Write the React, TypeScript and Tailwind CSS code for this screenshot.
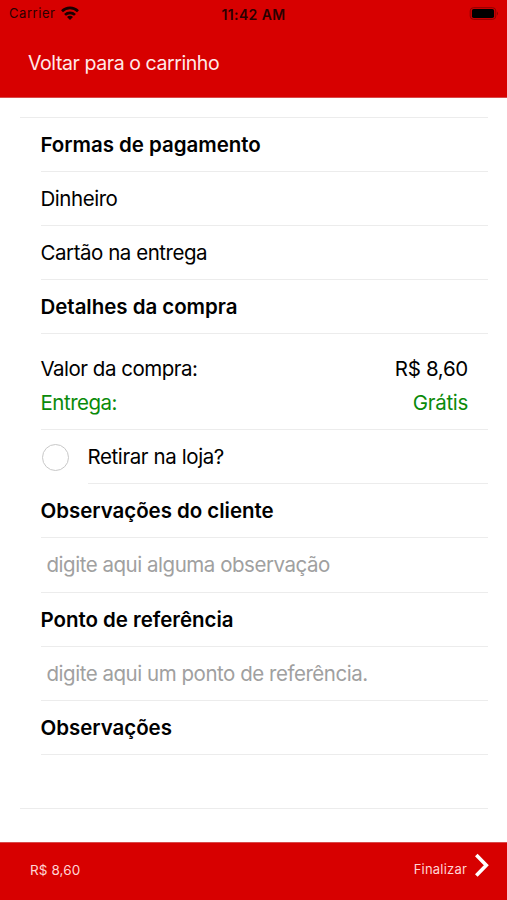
import type { ReactNode } from "react";

const VALOR = "R$ 8,60";

export default function App() {
  return (
    <div className="flex h-[900px] w-[507px] flex-col overflow-hidden bg-white font-['Inter',sans-serif] text-black">
      <header className="h-[98px] shrink-0 border-b border-[#d84a4a] bg-[#d70000]">
        <StatusBar />
        <button className="ml-7 mt-[22px] block text-[19.5px] leading-7 tracking-[-0.42px] text-[#ffe9e9]">
          Voltar para o carrinho
        </button>
      </header>

      <main className="ml-5 mr-[19px] mt-[19px] flex-1">
        <div className="border-y border-[#ececec] pl-[20.5px]">
          <Titulo>Formas de pagamento</Titulo>
          <Linha>Dinheiro</Linha>
          <Linha>Cartão na entrega</Linha>

          <Titulo>Detalhes da compra</Titulo>
          <div className="flex h-24 flex-col justify-center border-b border-[#ececec] pr-5 pt-[9px] text-[20.5px] tracking-[-0.5px]">
            <div className="flex h-[34px] items-center justify-between">
              <span>Valor da compra:</span>
              <span className="tracking-[-0.3px]">{VALOR}</span>
            </div>
            <div className="flex h-[34px] items-center justify-between text-[#0a8a0a]">
              <span>Entrega:</span>
              <span className="tracking-[-0.3px]">Grátis</span>
            </div>
          </div>

          <label className="flex h-[54px] items-center">
            <span className="ml-px size-[27px] shrink-0 rounded-full border border-[#c8c8c8]" />
            <span className="ml-[19px] flex h-full flex-1 items-center border-b border-[#ececec] pt-0.5 text-[20.5px] tracking-[-0.4px]">
              Retirar na loja?
            </span>
          </label>

          <Titulo>Observações do cliente</Titulo>
          <Campo placeholder="digite aqui alguma observação" />
          <Titulo>Ponto de referência</Titulo>
          <Campo placeholder="digite aqui um ponto de referência." />
          <Titulo>Observações</Titulo>
          <div className="h-[53px]" />
        </div>
      </main>

      <footer className="flex h-[58px] shrink-0 items-center justify-between border-t border-[#d84a4a] bg-[#d70000] pl-[30px] pr-[17px] text-[13px] tracking-[0.2px] text-[#ffd5d5]">
        <span className="-mt-[3px] text-[13.5px] tracking-[0.1px]">{VALOR}</span>
        <button className="-mt-[3px] flex items-center">
          <span>Finalizar</span>
          <svg className="-mt-[9px] ml-[7px]" width="16" height="25" viewBox="0 0 16 25" fill="none">
            <path d="M2.3 2 L12.3 12.3 L2.3 22.6" stroke="white" strokeWidth="3.6" />
          </svg>
        </button>
      </footer>
    </div>
  );
}

function StatusBar() {
  return (
    <div className="grid h-[27px] grid-cols-3 items-center px-2 text-[13px] text-[#2a0000]">
      <div className="flex items-center gap-1.5 pl-px">
        <span className="pt-px tracking-[0.55px]">Carrier</span>
        <svg className="-mt-px" width="18" height="14" viewBox="0 0 18 14" fill="none" stroke="#1a0000" strokeWidth="2.7">
          <path d="M1 5.2 A11.5 11.5 0 0 1 17 5.2" />
          <path d="M4 8.9 A7.2 7.2 0 0 1 14 8.9" />
          <path d="M9 14 L6 11 A4.2 4.2 0 0 1 12 11 Z" fill="#1a0000" stroke="none" />
        </svg>
      </div>
      <span className="pt-px text-center text-[14px] font-semibold tracking-[0.4px]">11:42 AM</span>
      <svg className="ml-auto" width="30" height="13" viewBox="0 0 30 13">
        <rect x="1.2" y="0.7" width="25.6" height="11.6" rx="3.2" fill="none" stroke="#8a0000" />
        <rect x="2.9" y="2" width="22.2" height="9" rx="1.8" fill="black" />
        <path d="M28 4.5 Q30 6.5 28 8.5 Z" fill="#8a0000" />
      </svg>
    </div>
  );
}

function Titulo({ children }: { children: ReactNode }) {
  return (
    <h2 className="flex h-[54px] items-center border-b border-[#ececec] pt-0.5 text-[20.5px] font-semibold tracking-[-0.04px]">
      {children}
    </h2>
  );
}

function Linha({ children }: { children: ReactNode }) {
  return (
    <div className="flex h-[54px] items-center border-b border-[#ececec] pt-0.5 text-[20.5px] tracking-[-0.46px]">
      {children}
    </div>
  );
}

function Campo({ placeholder }: { placeholder: string }) {
  return (
    <div className="flex h-[54.5px] items-center border-b border-[#ececec] pt-0.5">
      <input
        className="w-full bg-transparent pl-1.5 text-[20.5px] tracking-[-0.47px] outline-none placeholder:text-[#a0a0a0]"
        placeholder={placeholder}
      />
    </div>
  );
}
